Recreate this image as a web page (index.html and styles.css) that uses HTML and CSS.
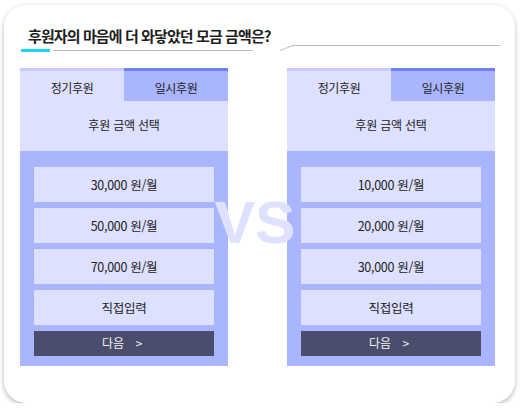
FILE: index.html
```html
<!DOCTYPE html>
<html lang="ko">
<head>
    <meta charset="UTF-8">
    <title>모금 금액 비교</title>
    <link rel="stylesheet" href="styles.css">
</head>
<body>

<!--카드 전체-->
<div class="card">
    <h2 class="title">후원자의 마음에 더 와닿았던 모금 금액은?</h2>

    <!--제목 밑줄 장식-->
    <svg class="rule" width="480" height="10" viewBox="0 0 480 10">
        <rect x="0" y="4" width="29" height="3" fill="#1cd3f2"/>
        <line x1="32" y1="5.5" x2="232" y2="5.5" stroke="#bdbdbd" stroke-width="1"/>
        <polyline points="259,5.5 272,0.5 479,0.5" fill="none" stroke="#bdbdbd" stroke-width="1"/>
    </svg>

    <div class="compare">
        <!--A안-->
        <div class="panel">
            <div class="tabs">
                <span class="tab on">정기후원</span>
                <span class="tab">일시후원</span>
            </div>
            <div class="head">후원 금액 선택</div>
            <div class="list">
                <div class="item">30,000 원/월</div>
                <div class="item">50,000 원/월</div>
                <div class="item">70,000 원/월</div>
                <div class="item">직접입력</div>
                <div class="next">다음 <span class="arrow">&gt;</span></div>
            </div>
        </div>

        <!--B안-->
        <div class="panel">
            <div class="tabs">
                <span class="tab on">정기후원</span>
                <span class="tab">일시후원</span>
            </div>
            <div class="head">후원 금액 선택</div>
            <div class="list">
                <div class="item">10,000 원/월</div>
                <div class="item">20,000 원/월</div>
                <div class="item">30,000 원/월</div>
                <div class="item">직접입력</div>
                <div class="next">다음 <span class="arrow">&gt;</span></div>
            </div>
        </div>

        <div class="vs">VS</div>
    </div>
</div>

</body>
</html>
```

FILE: styles.css
```css
* {
    margin: 0;
    padding: 0;
    box-sizing: border-box;
}

body {
    background-color: #fff;
    font-family: "Noto Sans CJK KR", "Noto Sans", sans-serif;
    color: #222;
}

.card {
    width: 511px;
    height: 398px;
    margin: 5px 0 0 4px;
    padding: 16px 0 0 16px;
    background-color: #fff;
    border-radius: 22px;
    box-shadow: 0 2px 5px rgba(0, 0, 0, 0.28);
}

.title {
    height: 24px;
    padding-left: 8px;
    font-size: 15px;
    font-weight: 700;
    line-height: 30px;
    letter-spacing: -0.9px;
    color: #1e1e1e;
}

.rule {
    display: block;
    margin: 0 0 0 1px;
}

.compare {
    position: relative;
    display: flex;
    gap: 59px;
    margin-top: 13px;
}

.panel {
    width: 208px;
}

.tabs {
    display: flex;
}

.tab {
    flex: 1;
    height: 33px;
    padding-top: 3px;
    border-top: 3px solid #6e7ef5;
    background-color: #a9b6ff;
    font-size: 12px;
    line-height: 27px;
    text-align: center;
    letter-spacing: -0.4px;
}

.tab.on {
    border-top-color: #c5cbff;
    background-color: #dde0ff;
}

.head {
    height: 50px;
    background-color: #dde0ff;
    font-size: 12px;
    line-height: 48px;
    text-align: center;
    letter-spacing: -0.2px;
}

.list {
    display: flex;
    flex-direction: column;
    gap: 6px;
    padding: 16px 14px 10px;
    background-color: #a9b6ff;
}

.item {
    height: 35px;
    background-color: #dde0ff;
    font-size: 12.5px;
    line-height: 35px;
    text-align: center;
    letter-spacing: -0.3px;
}

.next {
    height: 25px;
    background-color: #4a4d6b;
    color: #f2f2f5;
    font-size: 12px;
    line-height: 24px;
    text-align: center;
    padding-right: 4px;
}

.next .arrow {
    margin-left: 8px;
}

/* 가운데 VS 글자 */
.vs {
    position: absolute;
    left: 195px;
    top: 125px;
    font-family: "Liberation Sans", Arial, sans-serif;
    font-size: 60px;
    font-weight: 700;
    line-height: 60px;
    color: #dfe2ff;
    text-shadow: 0 0 1px #fff;
}
```
